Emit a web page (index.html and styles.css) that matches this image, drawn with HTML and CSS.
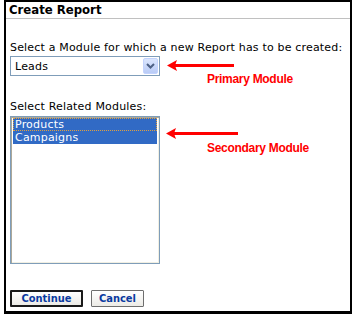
FILE: index.html
```html
<!DOCTYPE html>
<html>
<head>
<meta charset="utf-8">
<link rel="stylesheet" href="styles.css">
</head>
<body>
<div class="frame">
  <div class="title">Create Report</div>
  <div class="content">
    <div class="label first">Select a Module for which a new Report has to be created:</div>
    <div class="row">
      <div class="select">
        <span class="select-text">Leads</span>
        <span class="select-btn">
          <svg width="9" height="6" viewBox="0 0 9 6"><path d="M1 1 L4.5 4.5 L8 1" fill="none" stroke="#4d6185" stroke-width="2"/></svg>
        </span>
      </div>
      <div class="note note-primary">
        <svg class="arrow" width="67" height="13" viewBox="0 0 67 13"><rect x="8" y="5" width="59" height="3" fill="#ff0000"/><polygon points="0,6.5 10,1 8,6.5 10,12" fill="#ff0000"/></svg>
        <div class="note-text">Primary Module</div>
      </div>
    </div>
    <div class="label second">Select Related Modules:</div>
    <div class="row">
      <div class="listbox">
        <div class="item selected focused">Products</div>
        <div class="item selected">Campaigns</div>
      </div>
      <div class="note note-secondary">
        <svg class="arrow" width="72" height="13" viewBox="0 0 72 13"><rect x="8" y="5" width="64" height="3" fill="#ff0000"/><polygon points="0,6.5 10,1 8,6.5 10,12" fill="#ff0000"/></svg>
        <div class="note-text">Secondary Module</div>
      </div>
    </div>
    <div class="buttons">
      <button class="btn default">Continue</button>
      <button class="btn cancel">Cancel</button>
    </div>
  </div>
</div>
</body>
</html>
```
FILE: styles.css
```css
html, body {
  margin: 0;
  padding: 0;
  background: #ffffff;
}
body {
  font-family: "DejaVu Sans", Verdana, sans-serif;
  font-size: 11px;
  color: #000;
}
.frame {
  margin-left: 4px;
  width: 344px;
  height: 309px;
  border: 2px solid #000;
  border-bottom-width: 3px;
  box-sizing: content-box;
}
.title {
  font-family: "DejaVu Sans Condensed", "DejaVu Sans", sans-serif;
  font-weight: bold;
  font-size: 13px;
  line-height: 16px;
  padding-left: 3px;
  border-bottom: 1px solid #c0c0c0;
  height: 16px;
}
.content {
  padding-left: 4px;
  display: flex;
  flex-direction: column;
}
.label {
  line-height: 13px;
  height: 13px;
  white-space: nowrap;
  letter-spacing: 0.18px;
}
.label.first {
  margin-top: 22px;
}
.label.second {
  margin-top: 24px;
}
.row {
  display: flex;
  align-items: flex-start;
  position: relative;
}
.select {
  margin-top: 2px;
  width: 148px;
  height: 18px;
  border: 1px solid #7f9db9;
  display: flex;
  align-items: center;
  justify-content: space-between;
  background: #fff;
}
.select-text {
  padding-left: 4px;
  font-size: 11px;
  letter-spacing: 0.2px;
}
.select-btn {
  width: 15px;
  height: 16px;
  margin-right: 1px;
  box-sizing: border-box;
  border: 1px solid #c3d3fd;
  border-radius: 2px;
  background: linear-gradient(#dbe6fd, #b9cbf6);
  display: flex;
  align-items: center;
  justify-content: center;
}
.note {
  position: absolute;
  display: flex;
  flex-direction: column;
}
.note-primary {
  left: 157px;
  top: 5px;
}
.note-secondary {
  left: 156px;
  top: 14px;
}
.arrow {
  display: block;
}
.note-text {
  font-family: "Liberation Sans", Arial, sans-serif;
  font-weight: bold;
  font-size: 12px;
  line-height: 14px;
  color: #ff0000;
  margin-left: 40px;
  margin-top: 0;
  letter-spacing: -0.3px;
  white-space: nowrap;
}
.note-secondary .note-text {
  margin-left: 41px;
  margin-top: 1px;
}
.listbox {
  margin-top: 3px;
  width: 144px;
  height: 144px;
  border: 1px solid #7f9db9;
  box-shadow: inset 1px 1px 0 #aca899, inset -1px -1px 0 #f1efe2;
  padding: 1px 2px;
}
.item {
  line-height: 13px;
  height: 13px;
  padding-left: 2px;
  font-size: 11px;
  box-sizing: border-box;
  letter-spacing: 0.2px;
}
.item.selected {
  background: #316ac5;
  color: #fff;
}
.item.focused {
  outline: 1px dotted #e0a040;
  outline-offset: -1px;
}
.buttons {
  display: flex;
  gap: 8px;
  margin-top: 26px;
}
.btn {
  font-family: "DejaVu Sans Condensed", "DejaVu Sans", sans-serif;
  font-weight: bold;
  font-size: 11px;
  color: #0a3aa0;
  background: linear-gradient(#ffffff, #ecebe6);
  border: 1px solid #6e6e6e;
  border-radius: 1px;
  height: 17px;
  padding: 0;
  line-height: 14px;
  margin: 0;
  box-sizing: border-box;
}
.btn.default {
  border: 2px solid #1a1a1a;
  width: 73px;
}
.btn.cancel {
  width: 53px;
}
```
